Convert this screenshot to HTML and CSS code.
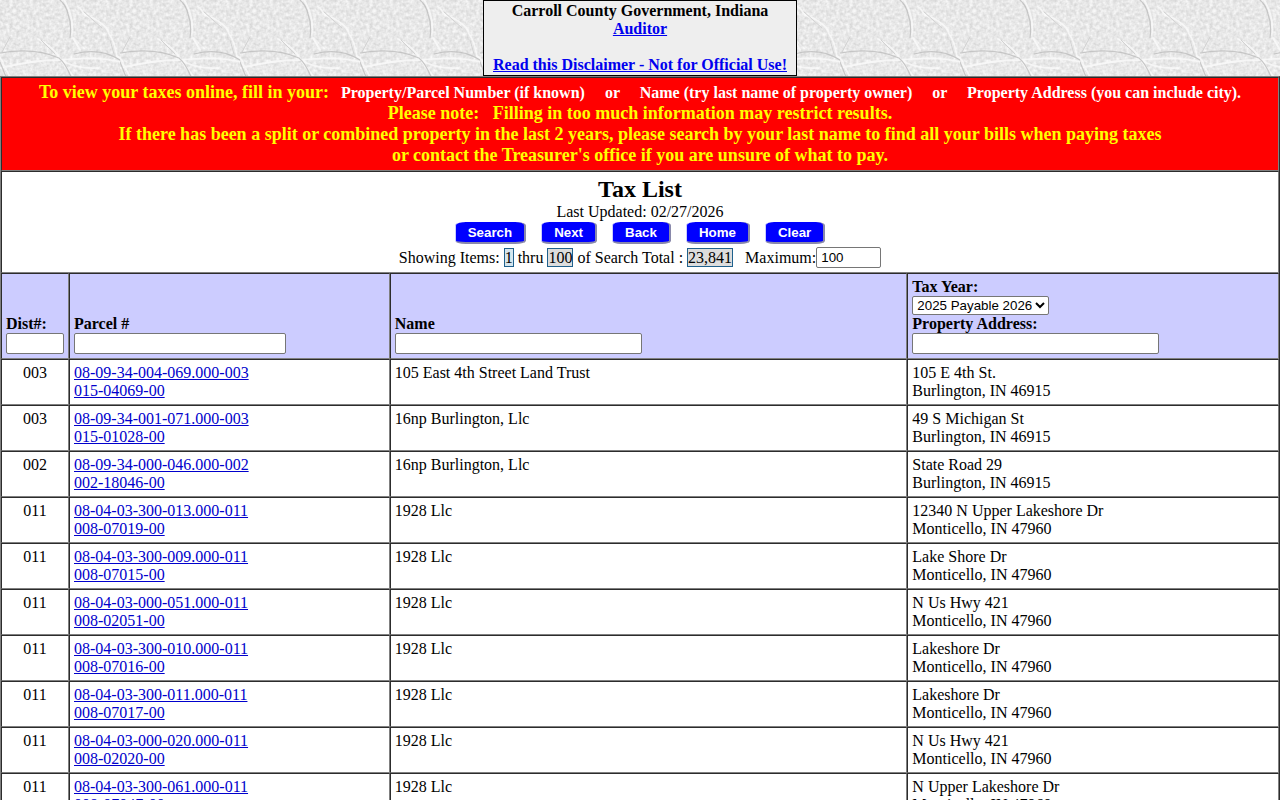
FILE: index.html
```html
<!DOCTYPE html>
<html lang="en">
<head>
<meta charset="utf-8">
<title>Tax List</title>
<link rel="stylesheet" href="styles.css">
</head>
<body>
<header class="banner">
  <div class="banner-box">
    <div>Carroll County Government, Indiana</div>
    <a href="#auditor">Auditor</a>
    <a class="disclaimer" href="#disclaimer">Read this Disclaimer - Not for Official Use!</a>
  </div>
</header>
<form>
<table class="tax-table">
  <colgroup><col class="col-dist"><col class="col-parcel"><col class="col-name"><col></colgroup>
  <thead>
    <tr><td class="notice" colspan="4">
      To view your taxes online, fill in your:<span class="hint"> &nbsp; Property/Parcel Number (if known) &nbsp; &nbsp; or &nbsp; &nbsp; Name (try last name of property owner) &nbsp; &nbsp; or &nbsp; &nbsp; Property Address (you can include city).</span><br>
      Please note: &nbsp; Filling in too much information may restrict results.<br>
      If there has been a split or combined property in the last 2 years, please search by your last name to find all your bills when paying taxes<br>
      or contact the Treasurer's office if you are unsure of what to pay.
    </td></tr>
    <tr><td class="summary" colspan="4">
      <h1>Tax List</h1>
      <div>Last Updated: 02/27/2026</div>
      <div class="actions">
        <button type="button">Search</button>
        <button type="button">Next</button>
        <button type="button">Back</button>
        <button type="button">Home</button>
        <button type="button">Clear</button>
      </div>
      <div class="range">
        <span>Showing Items: <span class="count first">1</span> thru <span class="count">100</span> of Search Total : <span class="count">23,841</span></span>
        <span class="maximum"><label for="maximum">Maximum:</label><input id="maximum" class="input-max" type="text" value="100"></span>
      </div>
    </td></tr>
    <tr class="filters">
      <th><label for="dist">Dist#:</label><input id="dist" class="input-dist" type="text"></th>
      <th><label for="parcel">Parcel #</label><input id="parcel" class="input-parcel" type="text"></th>
      <th><label for="name">Name</label><input id="name" class="input-wide" type="text"></th>
      <th><label for="year">Tax Year:</label><select id="year"><option>2025 Payable 2026</option></select><label for="address">Property Address:</label><input id="address" class="input-wide" type="text"></th>
    </tr>
  </thead>
  <tbody>
    <tr><td>003</td><td><a href="#p1">08-09-34-004-069.000-003<br>015-04069-00</a></td><td>105 East 4th Street Land Trust</td><td>105 E 4th St.<br>Burlington, IN 46915</td></tr>
    <tr><td>003</td><td><a href="#p2">08-09-34-001-071.000-003<br>015-01028-00</a></td><td>16np Burlington, Llc</td><td>49 S Michigan St<br>Burlington, IN 46915</td></tr>
    <tr><td>002</td><td><a href="#p3">08-09-34-000-046.000-002<br>002-18046-00</a></td><td>16np Burlington, Llc</td><td>State Road 29<br>Burlington, IN 46915</td></tr>
    <tr><td>011</td><td><a href="#p4">08-04-03-300-013.000-011<br>008-07019-00</a></td><td>1928 Llc</td><td>12340 N Upper Lakeshore Dr<br>Monticello, IN 47960</td></tr>
    <tr><td>011</td><td><a href="#p5">08-04-03-300-009.000-011<br>008-07015-00</a></td><td>1928 Llc</td><td>Lake Shore Dr<br>Monticello, IN 47960</td></tr>
    <tr><td>011</td><td><a href="#p6">08-04-03-000-051.000-011<br>008-02051-00</a></td><td>1928 Llc</td><td>N Us Hwy 421<br>Monticello, IN 47960</td></tr>
    <tr><td>011</td><td><a href="#p7">08-04-03-300-010.000-011<br>008-07016-00</a></td><td>1928 Llc</td><td>Lakeshore Dr<br>Monticello, IN 47960</td></tr>
    <tr><td>011</td><td><a href="#p8">08-04-03-300-011.000-011<br>008-07017-00</a></td><td>1928 Llc</td><td>Lakeshore Dr<br>Monticello, IN 47960</td></tr>
    <tr><td>011</td><td><a href="#p9">08-04-03-000-020.000-011<br>008-02020-00</a></td><td>1928 Llc</td><td>N Us Hwy 421<br>Monticello, IN 47960</td></tr>
    <tr><td>011</td><td><a href="#p10">08-04-03-300-061.000-011<br>008-07047-00</a></td><td>1928 Llc</td><td>N Upper Lakeshore Dr<br>Monticello, IN 47960</td></tr>
  </tbody>
</table>
</form>
</body>
</html>
```
FILE: styles.css
```css
* { box-sizing: border-box; }

html { scrollbar-width: none; }

body {
  margin: 0;
  font: 16px/18px "Liberation Serif", "Times New Roman", serif;
  color: #000;
  /* Embossed paper tile */
  background: #e9e9e9 url("data:image/svg+xml,%3Csvg xmlns='http://www.w3.org/2000/svg' width='120' height='120'%3E%3Cfilter id='g' x='0' y='0' width='100%25' height='100%25' color-interpolation-filters='sRGB'%3E%3CfeTurbulence type='fractalNoise' baseFrequency='.3' numOctaves='2' seed='4' stitchTiles='stitch'/%3E%3CfeColorMatrix values='.2 0 0 0 .81 .2 0 0 0 .81 .2 0 0 0 .81 0 0 0 0 1'/%3E%3C/filter%3E%3Crect width='120' height='120' filter='url(%23g)'/%3E%3Cg fill='none' stroke-linecap='round' stroke-linejoin='round'%3E%3Cg stroke='%23f9f9f9' stroke-width='1.8' stroke-opacity='.85'%3E%3Cpath d='M80 8Q86 18 93 18Q108 26 109 34Q114 40 117 56L123 62M64 0Q74 16 72 34M0 58L3 62M38 39Q54 47 61 60Q75 69 98 68M0 68Q34 60 59 60Q100 56 120 62M73 38L80 50M3 64L10 77M62 62L74 77'/%3E%3C/g%3E%3Cg stroke='%23bdbdbd' stroke-width='1.2' stroke-opacity='.8'%3E%3Cpath d='M60 0Q66 5 68 14Q72 24 70 38M0 53Q34 47 59 58Q66 64 71 77M74 54Q100 47 120 60M0 62L6 77'/%3E%3C/g%3E%3Cg stroke='%23d2d2d2'%3E%3Cpath d='M10 37L2 52M41 40L55 54M84 12L102 28M110 40L114 54'/%3E%3C/g%3E%3C/g%3E%3C/svg%3E");
}

a { color: #0000cc; }

.banner { display: flex; justify-content: center; }

.banner-box {
  display: flex;
  flex-direction: column;
  align-items: center;
  padding: 1px 9px;
  border: 1px solid #000;
  background: #eee;
  font-weight: bold;
}

.banner-box a { color: #0000ee; }

.disclaimer { margin-top: 18px; }

.tax-table {
  width: 100%;
  table-layout: fixed;
  border: 1px outset gray;
  border-spacing: 0;
  background: #fff;
}

.col-dist { width: 68px; }
.col-parcel { width: 25.1%; }
.col-name { width: 40.5%; }

.tax-table td,
.tax-table th {
  padding: 4px;
  border: 1px inset gray;
  text-align: left;
  vertical-align: top;
}

.tax-table tbody td:first-child,
.tax-table .summary { text-align: center; }

.tax-table .notice {
  background: #f00;
  color: #ff0;
  font-size: 18px;
  font-weight: bold;
  line-height: 21px;
  text-align: center;
}

.hint { color: #fff; font-size: 16px; }

h1 { margin: 0; font-size: 24px; line-height: 27px; }

.actions {
  display: flex;
  justify-content: center;
  gap: 15px;
  padding: 1px 0 3px;
}

button {
  height: 22px;
  padding: 0 12px;
  border: 2px outset #ccf;
  border-width: 0 2px 2px 1px;
  border-radius: 15%;
  background: #00f;
  color: #fff;
  font-family: "Liberation Sans", Arial, sans-serif;
  font-weight: bold;
}

.range { display: flex; justify-content: center; align-items: center; gap: 12px; }

.maximum { display: flex; align-items: center; }

.count { border: 1px solid #1f618d; background: #ddd; }

.count.first { background: #d6e6ee; }

.tax-table .filters th { background: #ccf; vertical-align: bottom; }

.filters label,
.filters input,
.filters select { display: block; }

input {
  height: 21px;
  padding: 1px 4px;
  border: 1px solid #767676;
  border-radius: 2px;
  background: #fff;
  font-family: "Liberation Sans", Arial, sans-serif;
}

select {
  height: 19px;
  border: 1px solid #767676;
  border-radius: 2px;
  background: #fff;
  font-family: "Liberation Sans", Arial, sans-serif;
}

.input-max { width: 65px; }
.input-dist { width: 58px; }
.input-parcel { width: 212px; max-width: 100%; }
.input-wide { width: 247px; max-width: 100%; }
```
